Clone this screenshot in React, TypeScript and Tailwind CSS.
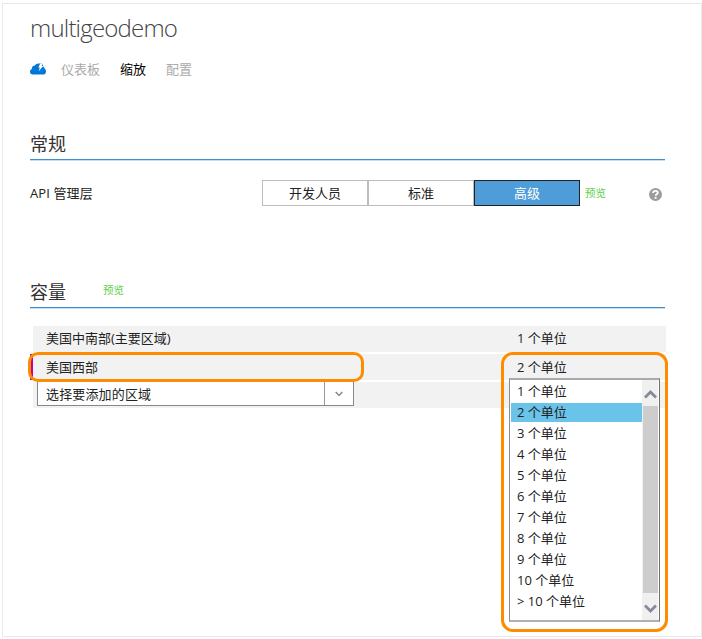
import type { ReactNode } from "react";

const units = [
  "1 个单位",
  "2 个单位",
  "3 个单位",
  "4 个单位",
  "5 个单位",
  "6 个单位",
  "7 个单位",
  "8 个单位",
  "9 个单位",
  "10 个单位",
  "> 10 个单位",
];

function CloudIcon() {
  return (
    <svg className="-mt-[3px] h-3 w-4 shrink-0" viewBox="0 0 16 12">
      <path
        d="M3 11.600C1.200 11.600 0 10.500 0 8.800 0 7.400.7 6.400 1.800 6c0-2 1.200-3.400 3-3.500C5.600 1.200 6.900.5 8.400.5h3.400c.9.7 1.300 1.600 1.300 2.900 1 .4 1.500 1.300 1.500 2.400 1 .5 1.400 1.400 1.400 2.700 0 1.900-1.200 3.100-3 3.100z"
        fill="#0078d7"
      />
      <path d="M10.200.5h2.500l-1 2.500h1.500L8.900 8.200l.8-3.600H8.300z" fill="#fff" />
    </svg>
  );
}

function HelpIcon() {
  return (
    <svg className="h-[13px] w-[13px]" viewBox="0 0 13 13">
      <circle cx="6.500" cy="6.500" r="6.500" fill="#9c9c9c" />
      <path d="M4.100 5.100C4.100 3.500 5.100 2.900 6.500 2.900s2.300.7 2.300 1.900c0 1.500-2.200 1.600-2.200 3" fill="none" stroke="#fff" strokeWidth="1.800" />
      <rect x="5.600" y="8.900" width="2" height="1.800" fill="#fff" />
    </svg>
  );
}

function SectionHeader({ title, children }: { title: string; children?: ReactNode }) {
  return (
    <div className="flex h-8 w-[635px] items-start border-b border-[#3c8fd0] shadow-[0_1px_0_#c5def1]">
      <h2 className="w-[73px] text-[18px] leading-8 text-[#333]">{title}</h2>
      {children}
    </div>
  );
}

function UnitList() {
  return (
    <div className="absolute left-[509px] top-[378px] flex h-[244px] w-[151px] border-x border-y-2 border-t-[#aaa] border-b-[#b0b0b0] border-l-[#8c8c8c] border-r-[#707070] bg-white pl-px">
      <ul className="w-[131px] pt-px">
        {units.map((unit, i) => (
          <li key={unit} className="flex h-[21px] items-center">
            <span className={`block h-[19px] w-full pl-1.5 leading-[19px] whitespace-nowrap ${i === 1 ? "bg-[#6ac3e9]" : ""}`}>
              {unit}
            </span>
          </li>
        ))}
      </ul>
      <div className="flex w-4 flex-col items-end bg-[#f0f0f0]">
        <svg className="h-[26px] w-4" viewBox="0 0 16 26">
          <path d="m3 17.500 5.500-5.500 5.500 5.500" fill="none" stroke="#868999" strokeWidth="2.800" />
        </svg>
        <div className="h-[187px] w-[15px] bg-[#cdcdcd]" />
        <svg className="h-[27px] w-4" viewBox="0 0 16 27">
          <path d="m3 12.500 5.500 5.500 5.500-5.500" fill="none" stroke="#868999" strokeWidth="2.800" />
        </svg>
      </div>
    </div>
  );
}

export default function App() {
  return (
    <div className="relative h-[639px] w-[702px] overflow-hidden bg-white pt-[3px] pl-0.5 font-['Open_Sans','Noto_Sans_CJK_SC',sans-serif] text-[13px] text-[#222]">
      <main className="h-[634px] w-[700px] border border-[#e9e9e9] pl-[27px]">
        <h1 className="h-[50px] text-[24px] leading-[48px] font-light tracking-[-0.8px] text-[#444]">multigeodemo</h1>
        <nav className="flex h-8 items-center text-[#aaa]">
          <CloudIcon />
          <span className="ml-[15px]">仪表板</span>
          <span className="ml-5 text-black">缩放</span>
          <span className="ml-5">配置</span>
        </nav>

        <section className="pt-[42px]">
          <SectionHeader title="常规" />
          <div className="mt-5 flex h-[26px] w-[636px] items-center">
            <span className="w-[232px] pt-0.5 tracking-[0.1px]">API 管理层</span>
            <div className="flex h-[26px] w-[318px] text-center leading-6">
              <button className="w-[106px] border border-[#bdbdbd]">开发人员</button>
              <button className="w-[106px] border border-[#bdbdbd]">标准</button>
              <button className="w-[106px] border border-[#222] bg-[#4f9dd8] text-white">高级</button>
            </div>
            <span className="ml-[5px] flex-1 pt-0.5 text-[10.500px] text-[#62cf4b]">预览</span>
            <span className="mr-1 pt-0.5"><HelpIcon /></span>
          </div>
        </section>

        <section className="pt-[70px]">
          <SectionHeader title="容量">
            <span className="text-[10.500px] leading-[28px] text-[#62cf4b]">预览</span>
          </SectionHeader>
          <div className="mt-[18px] flex w-[636px] flex-col gap-0.5">
            <div className="ml-[3px] flex h-[26px] items-center bg-[#f2f2f2] pl-[13px]">
              <span className="w-[471px]">美国中南部(主要区域)</span>
              <span>1 个单位</span>
            </div>
            <div className="flex h-[26px] items-center border-l-[3px] border-[#c4009f] bg-[#f2f2f2] pt-0.5 pl-[13px]">
              <span className="w-[471px]">美国西部</span>
              <span>2 个单位</span>
            </div>
            <div className="ml-[3px] h-[26px] bg-[#f2f2f2] pl-1">
              <div className="-mt-px flex h-[25px] w-[317px] border border-[#888] bg-white">
                <span className="flex-1 pl-2 leading-[25px] tracking-[0.15px]">选择要添加的区域</span>
                <span className="flex w-[29px] items-center justify-center border-l border-[#999]">
                  <svg className="h-1.5 w-2" viewBox="0 0 8 6">
                    <path d="m.7 1 3.300 3.400L7.300 1" fill="none" stroke="#777" strokeWidth="1.200" />
                  </svg>
                </span>
              </div>
            </div>
          </div>
        </section>
      </main>

      <UnitList />
      <div className="absolute left-[28px] top-[352px] h-[30px] w-[336px] rounded-[10px] border-[3px] border-[#ff8c00]" />
      <div className="absolute left-[501px] top-[352px] h-[280px] w-[167px] rounded-[12px] border-[3px] border-[#ff8c00]" />
    </div>
  );
}
